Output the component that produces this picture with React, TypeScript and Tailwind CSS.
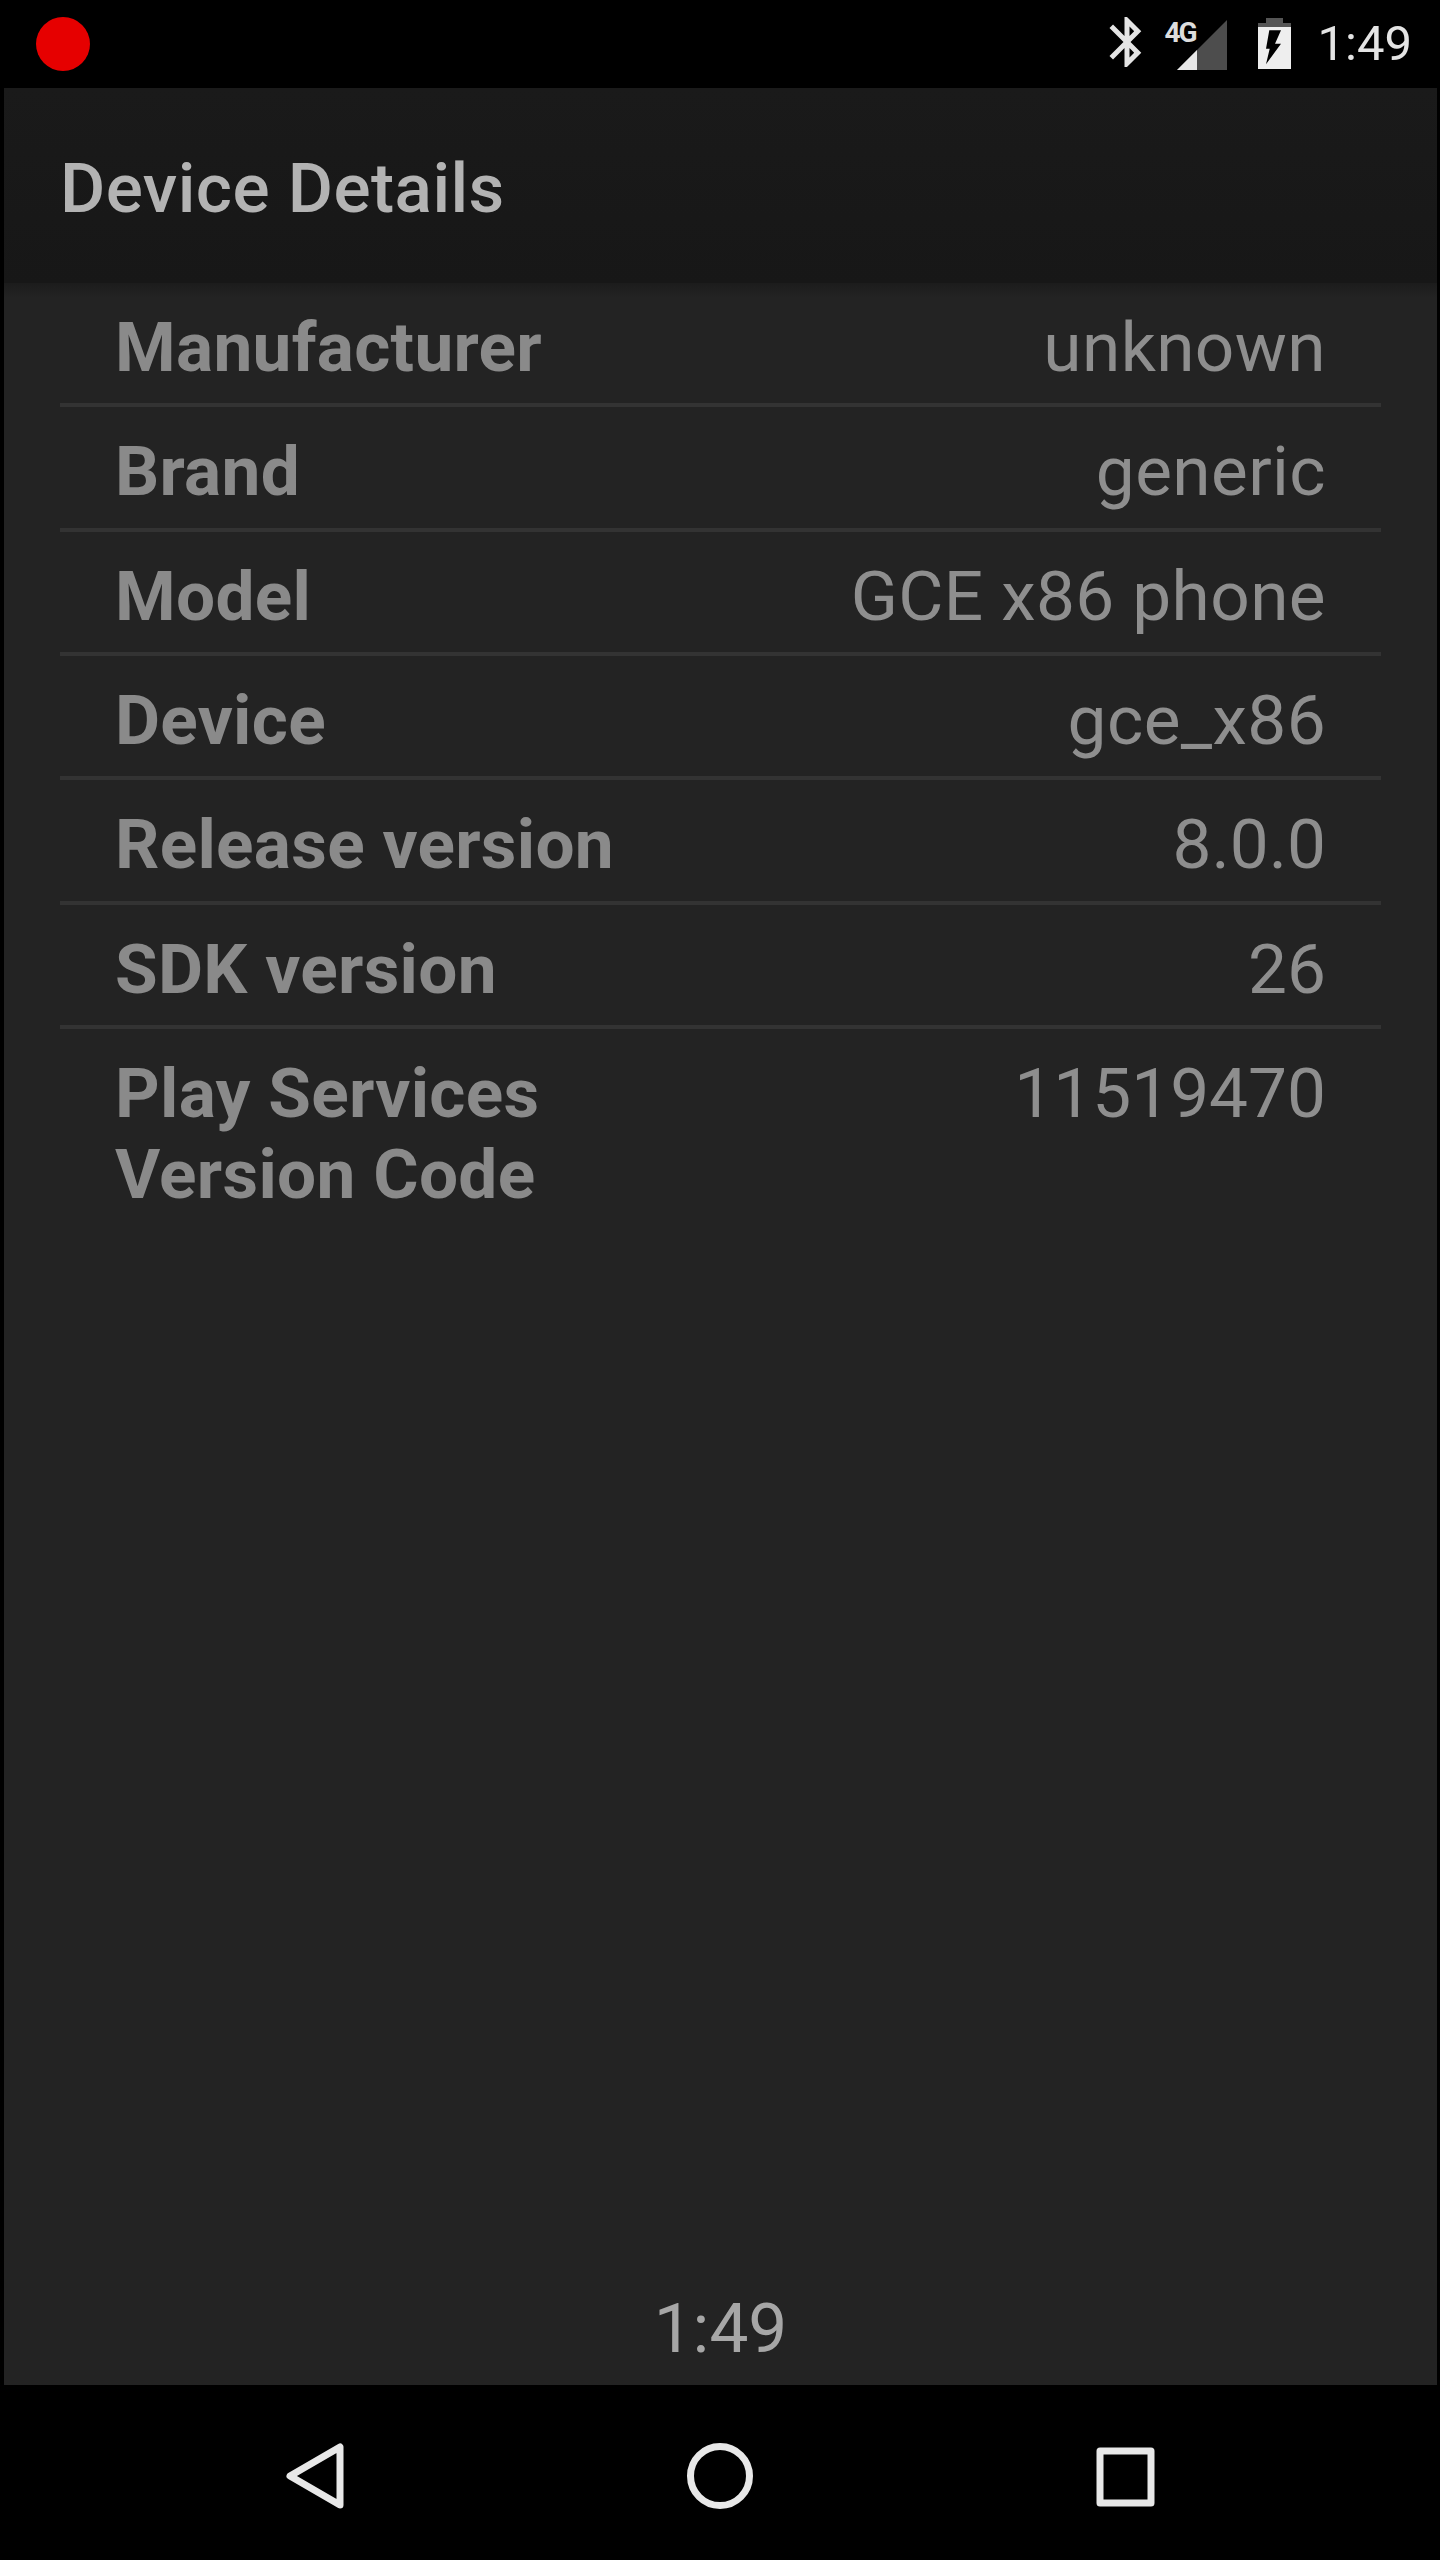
const ROWS = [
  { label: "Manufacturer", value: "unknown", wide: true },
  { label: "Brand", value: "generic", wide: true },
  { label: "Model", value: "GCE x86 phone", wide: true },
  { label: "Device", value: "gce_x86", wide: true },
  { label: "Release version", value: "8.0.0", wide: false },
  { label: "SDK version", value: "26", wide: false },
];

const DetailRow = ({ label, value, wide }: { label: string; value: string; wide: boolean }) => (
  <div className="flex justify-between border-b-4 border-[#333333] pt-[24px] pb-[15px] pl-[55px] pr-[55px]">
    <span className="font-bold tracking-[0.3px] text-[#8a8a8a]">{label}</span>
    <span className={wide ? "tracking-[0.4px] text-[#8e8e8e]" : "text-[#8e8e8e]"}>{value}</span>
  </div>
);

const StatusBar = () => (
  <div className="flex h-[88px] items-center bg-black">
    <div className="ml-[36px] h-[54px] w-[54px] rounded-full bg-[#e60000]" />
    <div className="ml-auto flex items-center">
      <svg width="60" height="60" viewBox="0 0 24 24" fill="#e4e4e4" className="mt-[-4px]">
        <path d="M17.71 7.71L12 2h-1v7.59L6.41 5 5 6.41 10.59 12 5 17.59 6.41 19 11 14.41V22h1l5.71-5.71-4.3-4.29 4.3-4.29zM13 5.83l1.88 1.88L13 9.59V5.83zm1.88 10.46L13 18.17v-3.76l1.88 1.88z" />
      </svg>
      <div className="relative ml-[8px] h-[60px] w-[65px]">
        <svg width="65" height="60" viewBox="0 0 65 60" className="mt-[-4px]">
          <path d="M62 10V60H12z" fill="#4d4d4d" />
          <path d="M32 40V60H12z" fill="#e8e8e8" />
        </svg>
        <span className="absolute left-0 top-[2px] text-[28px] leading-[34px] font-bold tracking-[-2px] text-[#dddddd]">4G</span>
      </div>
      <svg width="33" height="51" viewBox="0 0 33 51" className="ml-[28px] mt-[-2px]">
        <path d="M8 0H25V5H33V9H0V5H8z" fill="#555555" />
        <path d="M0 9H33V51H0z" fill="#eeeeee" />
        <path d="M11.3 12.3H23L17 25.7H23L8 46.3 11.7 30.7H8z" fill="#000000" />
      </svg>
      <span className="ml-[27px] mr-[28px] text-[49px] leading-[58px] text-[#e4e4e4]">1:49</span>
    </div>
  </div>
);

const NavBar = () => (
  <div className="flex h-[175px] justify-center bg-black pt-[55px]">
    <div className="flex w-[405px] justify-center">
      <svg width="72" height="72" viewBox="0 0 72 72" fill="none" stroke="#e8e8e8" strokeWidth="7" strokeLinejoin="round">
        <path d="M61 7V65L11 36z" />
      </svg>
    </div>
    <div className="flex w-[405px] justify-center">
      <svg width="72" height="72" viewBox="0 0 72 72" fill="none" stroke="#e8e8e8" strokeWidth="7">
        <circle cx="36" cy="36" r="29.5" />
      </svg>
    </div>
    <div className="flex w-[405px] justify-center">
      <svg width="72" height="72" viewBox="0 0 72 72" fill="none" stroke="#e8e8e8" strokeWidth="7" strokeLinejoin="round">
        <rect x="11" y="11" width="51" height="52" />
      </svg>
    </div>
  </div>
);

export default function App() {
  return (
    <div className="flex h-[2560px] flex-col bg-black font-['Roboto',sans-serif]">
      <StatusBar />
      <div className="mx-[3px] ml-[4px] flex flex-1 flex-col bg-[#232323]">
        <div className="flex h-[195px] items-center bg-gradient-to-b from-[#1a1a1a] to-[#171717] pt-[5px] pl-[56px] text-[69.33px] leading-[81px] font-medium tracking-[0.45px] text-[#b3b3b3]">
          Device Details
        </div>
        <div className="relative flex flex-1 flex-col text-[69.33px] leading-[81.33px]">
          <div className="absolute inset-x-0 top-0 h-[14px] bg-gradient-to-b from-[#1c1c1c] to-transparent" />
          <div className="mx-[56px]">
            {ROWS.map((row) => (
              <DetailRow key={row.label} {...row} />
            ))}
            <div className="flex justify-between pt-[24px] pl-[55px] pr-[55px]">
              <span className="font-bold tracking-[0.3px] text-[#8a8a8a]">
                Play Services
                <br />
                Version Code
              </span>
              <span className="text-[#8e8e8e]">11519470</span>
            </div>
          </div>
          <div className="mt-auto pb-[16px] text-center text-[#a6a6a6]">1:49</div>
        </div>
      </div>
      <NavBar />
    </div>
  );
}
